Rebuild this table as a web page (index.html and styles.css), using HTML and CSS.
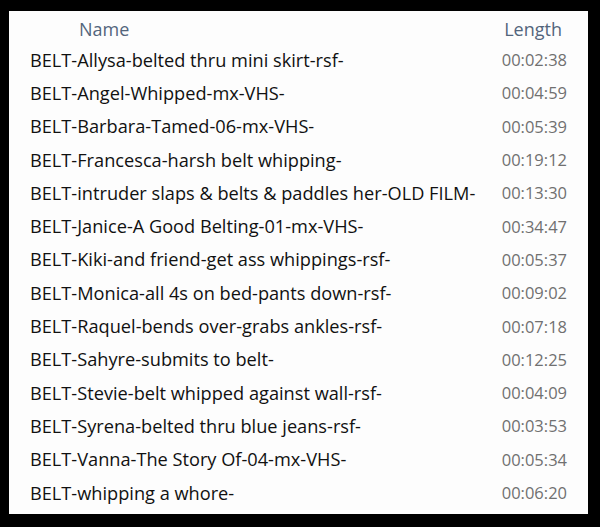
FILE: index.html
```html
<!DOCTYPE html>
<html>
<head>
<meta charset="utf-8">
<link rel="stylesheet" href="styles.css">
</head>
<body>
<div class="panel">
  <div class="header">
    <span class="h-name">Name</span>
    <span class="h-length">Length</span>
  </div>
  <div class="row"><span class="name">BELT-Allysa-belted thru mini skirt-rsf-</span><span class="time">00:02:38</span></div>
  <div class="row"><span class="name">BELT-Angel-Whipped-mx-VHS-</span><span class="time">00:04:59</span></div>
  <div class="row"><span class="name">BELT-Barbara-Tamed-06-mx-VHS-</span><span class="time">00:05:39</span></div>
  <div class="row"><span class="name">BELT-Francesca-harsh belt whipping-</span><span class="time">00:19:12</span></div>
  <div class="row"><span class="name">BELT-intruder slaps &amp; belts &amp; paddles her-OLD FILM-</span><span class="time">00:13:30</span></div>
  <div class="row"><span class="name">BELT-Janice-A Good Belting-01-mx-VHS-</span><span class="time">00:34:47</span></div>
  <div class="row"><span class="name">BELT-Kiki-and friend-get ass whippings-rsf-</span><span class="time">00:05:37</span></div>
  <div class="row"><span class="name">BELT-Monica-all 4s on bed-pants down-rsf-</span><span class="time">00:09:02</span></div>
  <div class="row"><span class="name">BELT-Raquel-bends over-grabs ankles-rsf-</span><span class="time">00:07:18</span></div>
  <div class="row"><span class="name">BELT-Sahyre-submits to belt-</span><span class="time">00:12:25</span></div>
  <div class="row"><span class="name">BELT-Stevie-belt whipped against wall-rsf-</span><span class="time">00:04:09</span></div>
  <div class="row"><span class="name">BELT-Syrena-belted thru blue jeans-rsf-</span><span class="time">00:03:53</span></div>
  <div class="row"><span class="name">BELT-Vanna-The Story Of-04-mx-VHS-</span><span class="time">00:05:34</span></div>
  <div class="row"><span class="name">BELT-whipping a whore-</span><span class="time">00:06:20</span></div>
</div>
</body>
</html>
```

FILE: styles.css
```css
html, body {
  margin: 0;
  padding: 0;
  background: #000;
}
body {
  width: 600px;
  height: 527px;
  overflow: hidden;
  font-family: "Open Sans", "Noto Sans", sans-serif;
}
.panel {
  margin: 11px 12px 0 9px;
  width: 579px;
  height: 503px;
  background: #fdfdfd;
  box-sizing: border-box;
  padding-top: 3px;
}
.header {
  height: 29px;
  display: flex;
  align-items: center;
  justify-content: space-between;
  padding: 0 26px 0 70px;
  color: #53657c;
  font-size: 18px;
}
.row {
  height: 33.3px;
  display: flex;
  align-items: center;
  justify-content: space-between;
  padding: 0 21px 0 21px;
  font-size: 18.2px;
}
.name {
  color: #111;
}
.time {
  color: #707070;
  font-size: 16.5px;
}
```
